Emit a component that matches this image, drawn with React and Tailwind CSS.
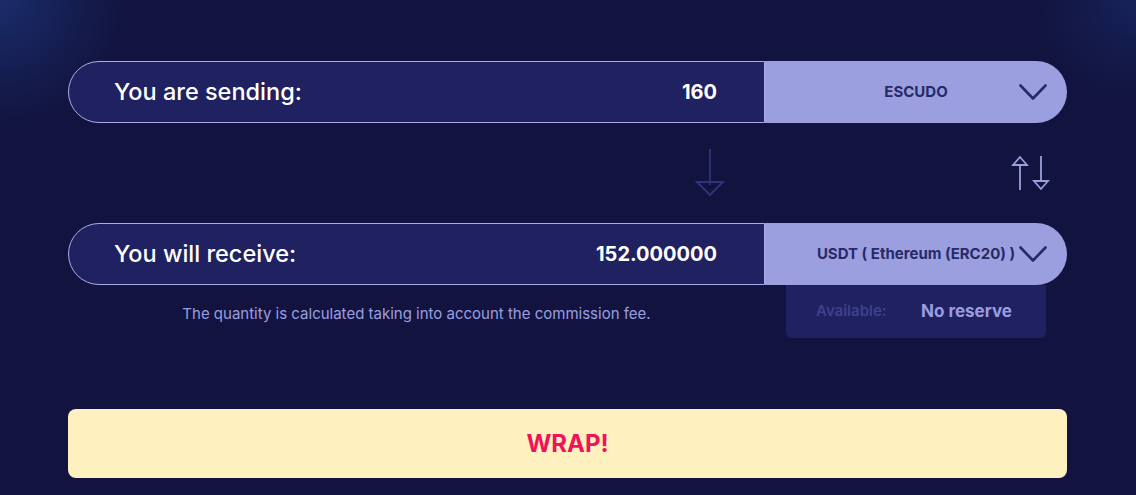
function Chevron() {
    return (
        <svg width="28" height="17" viewBox="0 0 28 17" fill="none" stroke="#262a66" strokeWidth="2.6" strokeLinecap="round" strokeLinejoin="round">
            <path d="M1.5 2 L14 15 L26.5 2" />
        </svg>
    );
}

function SwapIcon() {
    return (
        <svg width="40" height="36" viewBox="0 0 40 36" fill="none" stroke="#9b9fe0" strokeWidth="1.8" strokeLinejoin="miter">
            <path d="M10 35 V9" />
            <path d="M3 10 L10 2 L17 10 Z" />
            <path d="M31 1 V27" />
            <path d="M24 26 L31 34 L38 26 Z" />
        </svg>
    );
}

function DownArrow() {
    return (
        <svg width="30" height="48" viewBox="0 0 30 48" fill="none" stroke="#2f337a" strokeWidth="1.8">
            <path d="M15 0 V36" />
            <path d="M2 33 L15 46 L28 33 Z" />
        </svg>
    );
}

function AmountRow({ label, value, currency }) {
    return (
        <div className="flex h-[62px]">
            <div className="flex-1 flex items-center justify-between border border-[#a9ace9] rounded-l-full bg-[#1f2160] pl-[45px] pr-[47px]">
                <span className="text-[23.5px] font-medium text-white">{label}</span>
                <span className="text-[20px] font-bold text-white">{value}</span>
            </div>
            <div className="relative w-[302px] flex items-center justify-center bg-[#9b9fe0] rounded-r-full">
                <span className="text-[15px] font-bold text-[#262a66]">{currency}</span>
                <div className="absolute right-[20px] top-1/2 -translate-y-1/2 flex">
                    <Chevron />
                </div>
            </div>
        </div>
    );
}

export default function App() {
    return (
        <div
            className="min-h-screen w-full overflow-hidden bg-[#12143f] bg-[radial-gradient(circle_at_0%_0%,#1a2c6a_0%,rgba(18,20,63,0)_10%),radial-gradient(circle_at_100%_0%,#16225a_0%,rgba(18,20,63,0)_8%)]"
            style={{ fontFamily: "Inter, 'Noto Sans', sans-serif" }}
        >
            <div className="w-[999px] ml-[68px] pt-[61px] pb-[16px] flex flex-col">
                <AmountRow label="You are sending:" value="160" currency="ESCUDO" />

                <div className="h-[100px] flex items-center">
                    <div className="w-[697px] flex justify-end pr-[40px]">
                        <DownArrow />
                    </div>
                    <div className="flex-1 flex justify-end pr-[17px]">
                        <SwapIcon />
                    </div>
                </div>

                <AmountRow label="You will receive:" value="152.000000" currency="USDT ( Ethereum (ERC20) )" />

                <div className="flex">
                    <div className="w-[697px] flex justify-center pt-[18px]">
                        <span className="text-[15px] text-[#9a9ee0]">
                            The quantity is calculated taking into account the commission fee.
                        </span>
                    </div>
                    <div className="w-[302px] px-[21px]">
                        <div className="h-[53px] flex items-center bg-[#1f2160] rounded-b-md pl-[30px]">
                            <span className="w-[105px] text-[15px] font-semibold text-[#3d418d]">Available:</span>
                            <span className="text-[17px] font-bold text-[#9a9ee0]">No reserve</span>
                        </div>
                    </div>
                </div>

                <button className="mt-[71px] h-[69px] w-full rounded-lg bg-[#fff1bf] text-[24px] font-bold text-[#f0125a]">
                    WRAP!
                </button>
            </div>
        </div>
    );
}
